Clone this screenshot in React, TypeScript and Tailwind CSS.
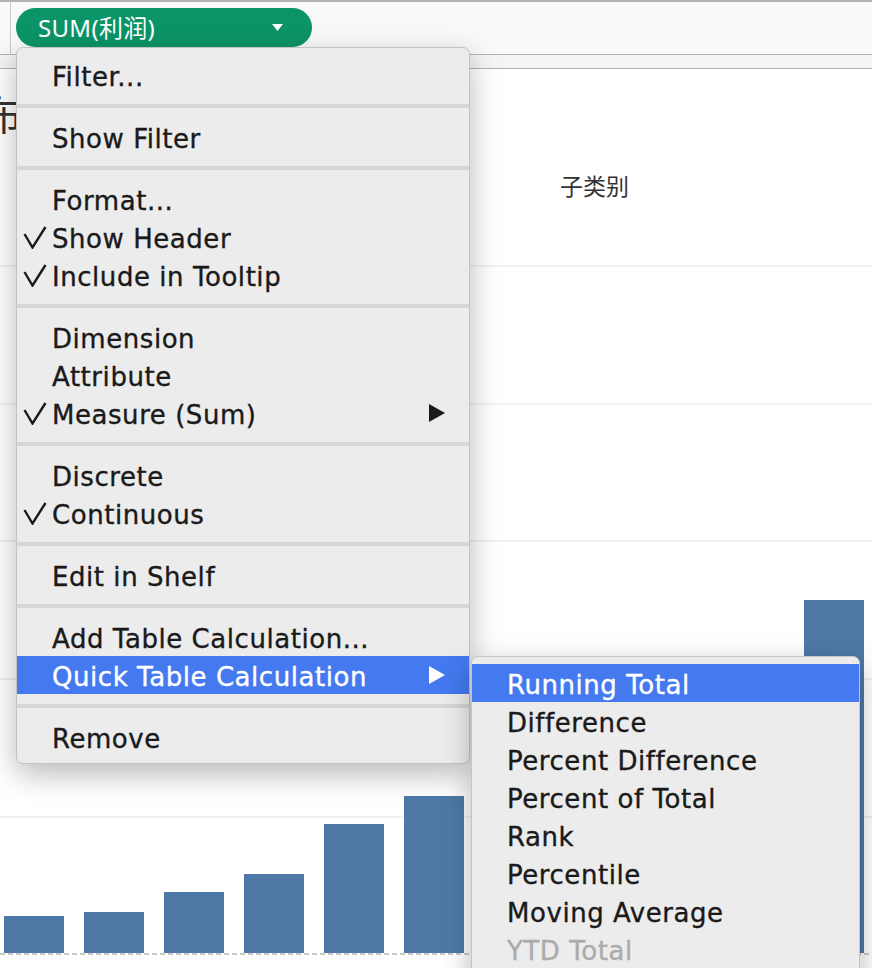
import clsx from 'clsx';

type MenuEntry =
  | 'sep'
  | { label: string; checked?: boolean; sub?: boolean; active?: boolean; disabled?: boolean };

const FIELD_MENU: MenuEntry[] = [
  { label: 'Filter...' },
  'sep',
  { label: 'Show Filter' },
  'sep',
  { label: 'Format...' },
  { label: 'Show Header', checked: true },
  { label: 'Include in Tooltip', checked: true },
  'sep',
  { label: 'Dimension' },
  { label: 'Attribute' },
  { label: 'Measure (Sum)', checked: true, sub: true },
  'sep',
  { label: 'Discrete' },
  { label: 'Continuous', checked: true },
  'sep',
  { label: 'Edit in Shelf' },
  'sep',
  { label: 'Add Table Calculation...' },
  { label: 'Quick Table Calculation', sub: true, active: true },
  'sep',
  { label: 'Remove' },
];

const QUICK_CALCS: MenuEntry[] = [
  { label: 'Running Total', active: true },
  { label: 'Difference' },
  { label: 'Percent Difference' },
  { label: 'Percent of Total' },
  { label: 'Rank' },
  { label: 'Percentile' },
  { label: 'Moving Average' },
  { label: 'YTD Total', disabled: true },
  { label: 'Compound Growth Rate', disabled: true },
];

// 利润 by 子类别, bar heights in px above the axis
const BARS = [37, 41, 61, 79, 129, 157, 186, 214, 242, 270, 353, 380];

const Check = () => (
  <svg width="24" height="23" viewBox="0 0 24 23" fill="none">
    <polyline points="1.5,8 9.5,21.5 22.5,1" stroke="currentColor" strokeWidth="2.4" strokeLinejoin="miter" />
  </svg>
);

const SubArrow = () => (
  <svg width="16" height="18" viewBox="0 0 16 18" className="mr-[24px] shrink-0">
    <polygon points="0,0 16,9 0,18" fill="currentColor" />
  </svg>
);

function MenuRow({ entry }: { entry: Exclude<MenuEntry, 'sep'> }) {
  return (
    <div
      className={clsx(
        'flex h-[38px] items-center leading-[38px]',
        entry.active ? 'bg-[#4479ef] text-white' : entry.disabled ? 'text-[#ababab]' : 'text-[#1a1a1a]'
      )}
    >
      <span className="flex w-[35px] shrink-0 pl-[6px]">{entry.checked && <Check />}</span>
      <span className="flex-1 whitespace-nowrap pt-[3px] tracking-[0.55px] [-webkit-text-stroke:0.35px_currentColor]">
        {entry.label}
      </span>
      {entry.sub && <SubArrow />}
    </div>
  );
}

function Menu({ entries, className }: { entries: MenuEntry[]; className: string }) {
  return (
    <div
      className={clsx(
        'absolute rounded-[7px] border border-[#c4c4c4] bg-[#ececec] text-[26px] shadow-[0_10px_30px_rgba(0,0,0,0.28)]',
        "font-['DejaVu_Sans',sans-serif]",
        className
      )}
    >
      {entries.map((e, i) =>
        e === 'sep' ? (
          <div key={i} className="my-[10px] h-[4px] bg-[#d6d6d6]" />
        ) : (
          <MenuRow key={i} entry={e} />
        )
      )}
    </div>
  );
}

export default function App() {
  return (
    <div className="relative flex h-[968px] w-[872px] flex-col overflow-hidden bg-white">
      {/* shelf with the measure pill */}
      <div className="flex h-[54px] shrink-0 border-t-2 border-[#b3b3b3] bg-[#f9f9f9]">
        <div className="w-[11px] border-r border-[#cacaca]" />
        <div className="pl-[5px] pt-[6px]">
          <div className="flex h-[39px] w-[296px] items-center justify-between rounded-full bg-[#0b9467] pl-[22px] pr-[29px] text-white">
            <span className="font-['Noto_Sans','Noto_Sans_CJK_SC',sans-serif] text-[24px] leading-none tracking-[0.3px]">SUM(利润)</span>
            <svg width="11" height="7" viewBox="0 0 11 7">
              <polygon points="0,0 11,0 5.5,7" fill="#ffffff" />
            </svg>
          </div>
        </div>
      </div>
      <div className="h-[15px] shrink-0 border-y border-[#b3b3b3] bg-[#f4f4f4]" />

      {/* view: gridlines and bars share one cell */}
      <div className="grid flex-1 font-['Noto_Sans','Noto_Sans_CJK_SC',sans-serif] text-[#333333]">
        <div className="col-start-1 row-start-1 flex flex-col">
          <div className="h-[196px] shrink-0">
            <div className="ml-[-58px] mt-[22px] whitespace-nowrap text-[40px] leading-[48px]">分布</div>
            <div className="mt-[32px] pl-[560px] text-[23px] leading-[30px]">子类别</div>
          </div>
          <div className="h-[138px] shrink-0 border-t-2 border-[#f1f1f1]" />
          <div className="h-[137px] shrink-0 border-t-2 border-[#f1f1f1]" />
          <div className="h-[138px] shrink-0 border-t-2 border-[#f1f1f1]" />
          <div className="h-[138px] shrink-0 border-t-2 border-[#f1f1f1]" />
          <div className="flex-1 border-t-2 border-[#f1f1f1]" />
        </div>
        <div className="col-start-1 row-start-1 flex flex-col justify-end">
          <div className="flex items-end gap-[20px] pl-[4px]">
            {BARS.map((h, i) => (
              <div key={i} className="w-[60px] shrink-0 bg-[#4e79a7]" style={{ height: h }} />
            ))}
          </div>
          <div className="h-[2px] bg-[repeating-linear-gradient(90deg,#c8c8c8_0_5px,transparent_5px_8px)]" />
          <div className="h-[13px]" />
        </div>
      </div>

      <Menu entries={FIELD_MENU} className="left-[16px] top-[47px] w-[454px] pb-[7px] pt-[8px]" />
      <Menu entries={QUICK_CALCS} className="left-[471px] top-[656px] w-[389px] pb-[7px] pt-[7px]" />
    </div>
  );
}
